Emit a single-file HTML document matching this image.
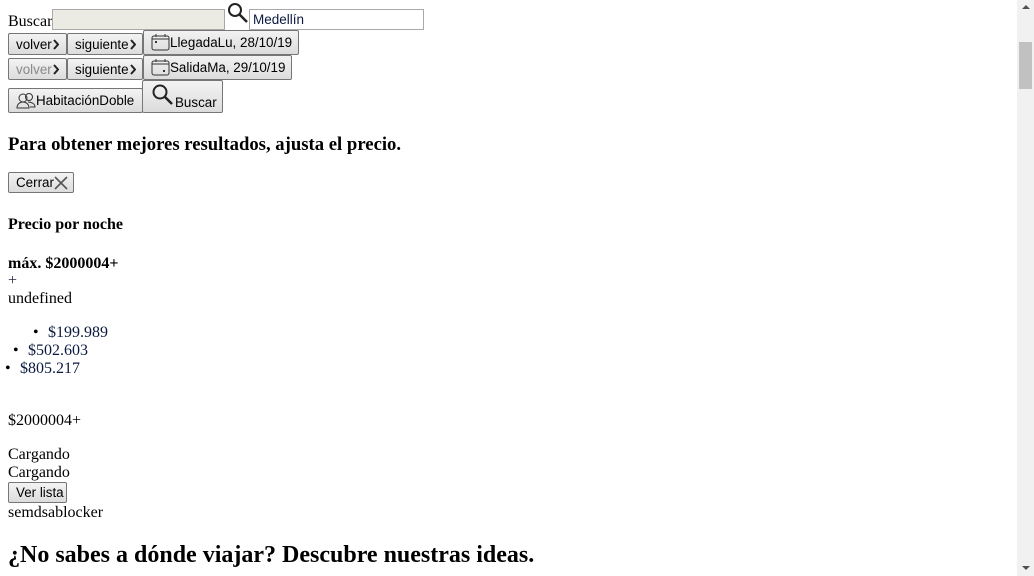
<!DOCTYPE html>
<html><head><meta charset="utf-8"><style>
html,body{margin:0;padding:0;width:1034px;height:576px;overflow:hidden;background:#fff;}
body{font-family:"Liberation Sans",serif;font-family:"Liberation Serif",serif;font-size:16px;color:#000;position:relative;}
.a{position:absolute;white-space:nowrap;line-height:18px;}
.btn{position:absolute;box-sizing:border-box;border:1px solid #767676;background:linear-gradient(#f3f3f3,#dcdcdc);font-family:"Liberation Sans",sans-serif;font-size:13.4px;color:#000;display:flex;align-items:center;padding:0 0 0 7px;white-space:nowrap;border-radius:2px;overflow:hidden}
.inp{position:absolute;box-sizing:border-box;border:1px solid #a9a9a9;font-family:"Liberation Sans",sans-serif;font-size:13.5px;padding-left:3px;line-height:19px;}
.sb{position:absolute;right:0;top:0;width:17px;height:576px;background:#f1f1f1;}
svg{display:block}
.chev{margin-left:1px}
</style></head><body>
<div class="a" style="left:8px;top:13px">Buscar</div>
<div class="inp" style="left:52px;top:9px;width:173px;height:21px;background:#ebebe4"></div>
<svg class="a" style="left:227px;top:2px" width="22" height="22" viewBox="0 0 22 22"><circle cx="8" cy="8" r="6" fill="none" stroke="#222" stroke-width="2"/><line x1="12.5" y1="12.5" x2="20" y2="20" stroke="#222" stroke-width="2.5"/></svg>
<div class="inp" style="left:249px;top:9px;width:175px;height:21px;background:#fff;color:#0a1a40">Medellín</div>

<div class="btn" style="left:8px;top:33px;width:59px;height:22px">volver<svg class="chev" width="6" height="11" viewBox="0 0 6 11"><path d="M1 1l4 4.5L1 10" fill="none" stroke="#222" stroke-width="2"/></svg></div>
<div class="btn" style="left:67px;top:33px;width:76px;height:22px">siguiente<svg class="chev" width="6" height="11" viewBox="0 0 6 11"><path d="M1 1l4 4.5L1 10" fill="none" stroke="#222" stroke-width="2"/></svg></div>
<div class="btn" style="left:143px;top:30px;width:156px;height:25px"><svg width="19" height="19" viewBox="0 0 19 19"><rect x="1" y="3" width="17" height="14" rx="2" fill="none" stroke="#333"/><line x1="1" y1="6" x2="18" y2="6" stroke="#333"/><line x1="5" y1="1" x2="5" y2="4" stroke="#333"/><line x1="14" y1="1" x2="14" y2="4" stroke="#333"/><rect x="4" y="8" width="2" height="2" fill="#333"/></svg>LlegadaLu, 28/10/19</div>

<div class="btn" style="left:8px;top:58px;width:59px;height:22px;color:#888">volver<svg class="chev" width="6" height="11" viewBox="0 0 6 11"><path d="M1 1l4 4.5L1 10" fill="none" stroke="#222" stroke-width="2"/></svg></div>
<div class="btn" style="left:67px;top:58px;width:76px;height:22px">siguiente<svg class="chev" width="6" height="11" viewBox="0 0 6 11"><path d="M1 1l4 4.5L1 10" fill="none" stroke="#222" stroke-width="2"/></svg></div>
<div class="btn" style="left:143px;top:55px;width:149px;height:25px"><svg width="19" height="19" viewBox="0 0 19 19"><rect x="1" y="3" width="17" height="14" rx="2" fill="none" stroke="#333"/><line x1="1" y1="6" x2="18" y2="6" stroke="#333"/><line x1="5" y1="1" x2="5" y2="4" stroke="#333"/><line x1="14" y1="1" x2="14" y2="4" stroke="#333"/><rect x="12" y="12" width="2" height="2" fill="#333"/></svg>SalidaMa, 29/10/19</div>

<div class="btn" style="left:8px;top:88px;width:135px;height:25px"><svg width="20" height="18" viewBox="0 0 20 18"><circle cx="7" cy="6" r="4" fill="none" stroke="#333"/><path d="M1 16c0-4 3-6 6-6s6 2 6 6z" fill="none" stroke="#333"/><circle cx="13" cy="5" r="3.5" fill="none" stroke="#333"/><path d="M12 10c4 0 7 2 7 5h-5" fill="none" stroke="#333"/></svg>HabitaciónDoble</div>
<div class="btn" style="left:142px;top:80px;width:81px;height:33px;align-items:flex-end;padding:0 0 2px 8px"><svg width="24" height="24" viewBox="0 0 24 24" style="align-self:flex-start;margin-top:2px"><circle cx="9" cy="9" r="6.5" fill="none" stroke="#222" stroke-width="2"/><line x1="14" y1="14" x2="21" y2="21" stroke="#222" stroke-width="2.5"/></svg><span>Buscar</span></div>

<div class="a" style="left:8px;top:134px;font-size:18.7px;font-weight:bold;line-height:22px">Para obtener mejores resultados, ajusta el precio.</div>
<div class="btn" style="left:8px;top:172px;width:66px;height:21px">Cerrar<svg width="14" height="14" viewBox="0 0 14 14"><path d="M1 1L13 13M13 1L1 13" stroke="#555" stroke-width="1.6"/></svg></div>
<div class="a" style="left:8px;top:216px;font-weight:bold">Precio por noche</div>
<div class="a" style="left:8px;top:255px;font-weight:bold">máx. $2000004+</div>
<div class="a" style="left:8px;top:272px;color:#302040">+</div>
<div class="a" style="left:8px;top:290px">undefined</div>
<div class="a" style="left:33px;top:324px">&#8226;</div><div class="a" style="left:48px;top:324px;color:#0a1a40">$199.989</div>
<div class="a" style="left:13px;top:342px">&#8226;</div><div class="a" style="left:28px;top:342px;color:#0a1a40">$502.603</div>
<div class="a" style="left:5px;top:360px">&#8226;</div><div class="a" style="left:20px;top:360px;color:#0a1a40">$805.217</div>
<div class="a" style="left:8px;top:412px">$2000004+</div>
<div class="a" style="left:8px;top:446px">Cargando</div>
<div class="a" style="left:8px;top:464px">Cargando</div>
<div class="btn" style="left:8px;top:482px;width:59px;height:21px">Ver lista</div>
<div class="a" style="left:8px;top:504px">semdsablocker</div>
<div class="a" style="left:8px;top:541px;font-size:24px;font-weight:bold;line-height:28px">¿No sabes a dónde viajar? Descubre nuestras ideas.</div>

<div class="sb">
<div style="position:absolute;left:5px;top:5px;width:0;height:0;border-left:4px solid transparent;border-right:4px solid transparent;border-bottom:4px solid #505050"></div>
<div style="position:absolute;left:2px;top:42px;width:13px;height:47px;background:#c1c1c1"></div>
<div style="position:absolute;left:5px;bottom:6px;width:0;height:0;border-left:4px solid transparent;border-right:4px solid transparent;border-top:4px solid #505050"></div>
</div>
</body></html>
